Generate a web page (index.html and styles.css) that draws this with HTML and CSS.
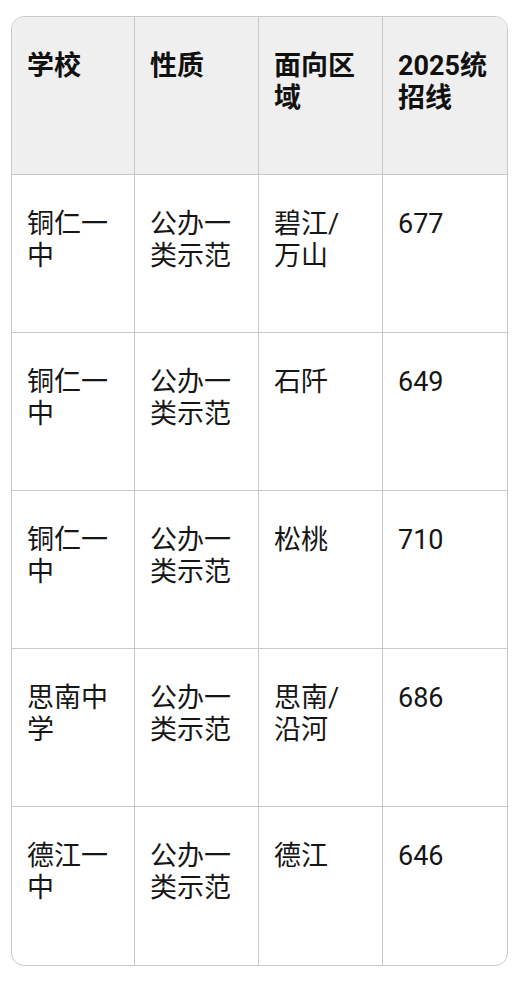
FILE: index.html
```html
<!DOCTYPE html>
<html lang="zh-CN">
<head>
<meta charset="utf-8">
<title>2025统招线</title>
<link rel="stylesheet" href="styles.css">
</head>
<body>
<div class="table-wrap">
  <table class="score-table">
    <colgroup>
      <col class="c1"><col class="c2"><col class="c3"><col class="c4">
    </colgroup>
    <thead>
      <tr>
        <th>学校</th>
        <th>性质</th>
        <th>面向区域</th>
        <th>2025统招线</th>
      </tr>
    </thead>
    <tbody>
      <tr><td>铜仁一中</td><td>公办一类示范</td><td>碧江/万山</td><td>677</td></tr>
      <tr><td>铜仁一中</td><td>公办一类示范</td><td>石阡</td><td>649</td></tr>
      <tr><td>铜仁一中</td><td>公办一类示范</td><td>松桃</td><td>710</td></tr>
      <tr><td>思南中学</td><td>公办一类示范</td><td>思南/沿河</td><td>686</td></tr>
      <tr><td>德江一中</td><td>公办一类示范</td><td>德江</td><td>646</td></tr>
    </tbody>
  </table>
</div>
</body>
</html>
```
FILE: styles.css
```css
html, body {
  margin: 0;
  padding: 0;
  background: #ffffff;
}

body {
  font-family: Roboto, "Noto Sans CJK SC", sans-serif;
  color: #161616;
}

.table-wrap {
  margin: 16px 0 0 11px;
  width: 495px;
  border: 1px solid #c9c9c9;
  border-radius: 13px;
  overflow: hidden;
}

.score-table {
  width: 100%;
  border-collapse: separate;
  border-spacing: 0;
  table-layout: fixed;
}

.c1 { width: 123px; }
.c2 { width: 124px; }
.c3 { width: 124px; }

.score-table tr {
  height: 158px;
}

.score-table th,
.score-table td {
  vertical-align: top;
  text-align: left;
  padding: 33px 20px 0 15px;
  font-size: 27px;
  line-height: 32px;
  border-right: 1px solid #c9c9c9;
  border-bottom: 1px solid #c9c9c9;
}

.score-table th {
  background: #efefef;
  font-weight: 700;
  color: #111111;
}

.score-table td {
  font-weight: 400;
}

.score-table th:last-child,
.score-table td:last-child {
  border-right: none;
  padding-right: 12px;
}

.score-table tbody tr:last-child td {
  border-bottom: none;
}
```
